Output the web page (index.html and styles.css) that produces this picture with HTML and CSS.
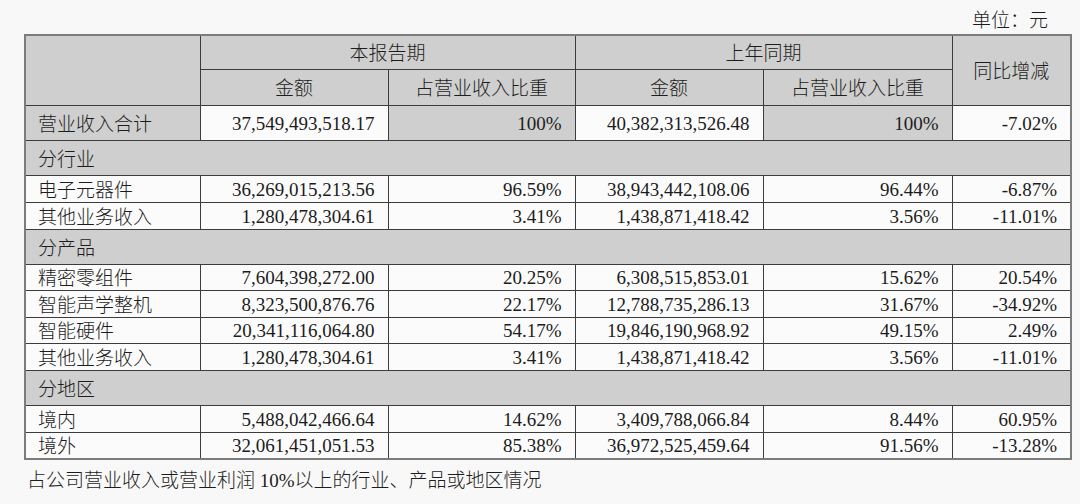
FILE: index.html
```html
<!DOCTYPE html>
<html lang="zh-CN">
<head>
<meta charset="utf-8">
<link rel="stylesheet" href="styles.css">
</head>
<body>
<div class="page">
  <div class="unit">单位：元</div>
  <table class="report">
    <colgroup>
      <col class="c-label">
      <col class="c-amt">
      <col class="c-pct">
      <col class="c-amt">
      <col class="c-pct2">
      <col class="c-yoy">
    </colgroup>
    <thead>
      <tr class="h1">
        <th rowspan="2" class="g"></th>
        <th colspan="2" class="g">本报告期</th>
        <th colspan="2" class="g">上年同期</th>
        <th rowspan="2" class="g">同比增减</th>
      </tr>
      <tr class="h2">
        <th class="g">金额</th>
        <th class="g">占营业收入比重</th>
        <th class="g">金额</th>
        <th class="g">占营业收入比重</th>
      </tr>
    </thead>
    <tbody>
      <tr class="tot">
        <td class="g lbl">营业收入合计</td>
        <td class="num">37,549,493,518.17</td>
        <td class="g num">100%</td>
        <td class="num">40,382,313,526.48</td>
        <td class="g num">100%</td>
        <td class="num">-7.02%</td>
      </tr>
      <tr class="cat"><td colspan="6" class="g lbl">分行业</td></tr>
      <tr class="row"><td class="lbl">电子元器件</td><td class="num">36,269,015,213.56</td><td class="num">96.59%</td><td class="num">38,943,442,108.06</td><td class="num">96.44%</td><td class="num">-6.87%</td></tr>
      <tr class="row"><td class="lbl">其他业务收入</td><td class="num">1,280,478,304.61</td><td class="num">3.41%</td><td class="num">1,438,871,418.42</td><td class="num">3.56%</td><td class="num">-11.01%</td></tr>
      <tr class="cat"><td colspan="6" class="g lbl">分产品</td></tr>
      <tr class="row sm"><td class="lbl">精密零组件</td><td class="num">7,604,398,272.00</td><td class="num">20.25%</td><td class="num">6,308,515,853.01</td><td class="num">15.62%</td><td class="num">20.54%</td></tr>
      <tr class="row sm"><td class="lbl">智能声学整机</td><td class="num">8,323,500,876.76</td><td class="num">22.17%</td><td class="num">12,788,735,286.13</td><td class="num">31.67%</td><td class="num">-34.92%</td></tr>
      <tr class="row sm"><td class="lbl">智能硬件</td><td class="num">20,341,116,064.80</td><td class="num">54.17%</td><td class="num">19,846,190,968.92</td><td class="num">49.15%</td><td class="num">2.49%</td></tr>
      <tr class="row sm"><td class="lbl">其他业务收入</td><td class="num">1,280,478,304.61</td><td class="num">3.41%</td><td class="num">1,438,871,418.42</td><td class="num">3.56%</td><td class="num">-11.01%</td></tr>
      <tr class="cat"><td colspan="6" class="g lbl">分地区</td></tr>
      <tr class="row"><td class="lbl">境内</td><td class="num">5,488,042,466.64</td><td class="num">14.62%</td><td class="num">3,409,788,066.84</td><td class="num">8.44%</td><td class="num">60.95%</td></tr>
      <tr class="row"><td class="lbl">境外</td><td class="num">32,061,451,051.53</td><td class="num">85.38%</td><td class="num">36,972,525,459.64</td><td class="num">91.56%</td><td class="num">-13.28%</td></tr>
    </tbody>
  </table>
  <p class="note">占公司营业收入或营业利润 10%以上的行业、产品或地区情况</p>
</div>
</body>
</html>
```

FILE: styles.css
```css
html, body {
  margin: 0;
  padding: 0;
  background: #f8f8f8;
}
body {
  font-family: "Liberation Serif", "Noto Sans CJK SC", serif;
  font-size: 19px;
  color: #1c1c1c;
  width: 1080px;
  height: 504px;
  overflow: hidden;
}
.page {
  padding: 0 10px 0 24px;
}
.unit {
  height: 34px;
  line-height: 38px;
  text-align: right;
  padding-right: 22px;
  box-sizing: border-box;
  font-family: "Noto Sans CJK SC", sans-serif;
  font-weight: 300;
}
.report {
  border-collapse: collapse;
  table-layout: fixed;
  width: 1046px;
  border: 2px solid #7c7c7c;
}
.c-label { width: 175px; }
.c-amt { width: 188px; }
.c-pct { width: 187px; }
.c-pct2 { width: 189px; }
.c-yoy { width: 119px; }
.report th,
.report td {
  border: 1px solid #3c3c3c;
  padding: 0 12px;
  background: #fbfbfb;
  font-weight: normal;
  line-height: 22px;
  white-space: nowrap;
  overflow: hidden;
}
.report th {
  text-align: center;
  font-family: "Noto Sans CJK SC", sans-serif;
  font-weight: 300;
}
.report .g {
  background: #cfcfcf;
}
.report .lbl {
  font-family: "Noto Sans CJK SC", sans-serif;
  font-weight: 300;
  text-align: left;
  padding-left: 12px;
}
.report .num {
  text-align: right;
  padding-right: 13px;
  padding-top: 2px;
}
.h1 { height: 34px; }
.h2 { height: 36px; }
.tot { height: 35px; }
.cat { height: 35px; }
.row { height: 27px; }
.row.sm { height: 26.5px; }
.note {
  margin: 6px 0 0 3px;
  font-family: "Liberation Serif", "Noto Sans CJK SC", serif;
  font-weight: 300;
  line-height: 30px;
}
```
